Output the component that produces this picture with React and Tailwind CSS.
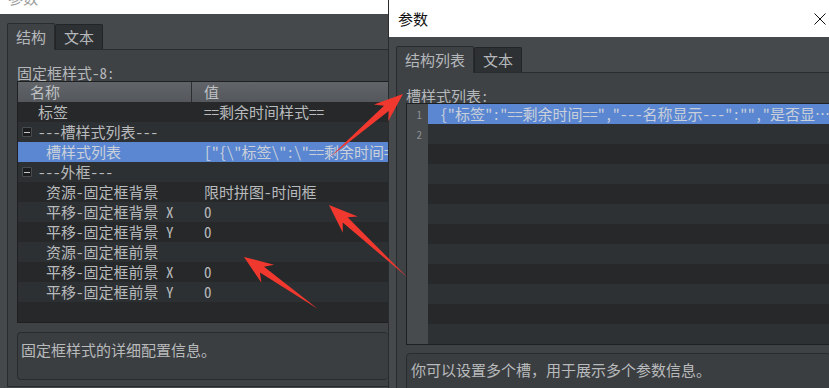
const font = { fontFamily: '"Noto Sans Mono CJK SC", "Noto Sans CJK SC", "DejaVu Sans Mono", monospace' }

const rows = [
  { kind: 'leaf', depth: 0, name: '标签', value: '==剩余时间样式==' },
  { kind: 'group', name: '---槽样式列表---' },
  { kind: 'leaf', depth: 1, name: '槽样式列表', value: '["{\\"标签\\":\\"==剩余时间==\\",\\"---名称显示', selected: true },
  { kind: 'group', name: '---外框---' },
  { kind: 'leaf', depth: 1, name: '资源-固定框背景', value: '限时拼图-时间框' },
  { kind: 'leaf', depth: 1, name: '平移-固定框背景 X', value: '0' },
  { kind: 'leaf', depth: 1, name: '平移-固定框背景 Y', value: '0' },
  { kind: 'leaf', depth: 1, name: '资源-固定框前景', value: '' },
  { kind: 'leaf', depth: 1, name: '平移-固定框前景 X', value: '0' },
  { kind: 'leaf', depth: 1, name: '平移-固定框前景 Y', value: '0' },
  { kind: 'empty' },
]

function Tab({ label, active }) {
  return (
    <div
      className={
        active
          ? 'relative z-10 -mb-px flex h-[27px] items-center rounded-t-[2px] border border-b-0 border-[#2a2b2d] bg-[#3f4245] px-[8px] text-[#b5b8bb]'
          : 'flex h-[25px] items-center rounded-t-[2px] border border-b-0 border-[#232426] bg-[#2e3133] px-[8px] text-[#b5b8bb]'
      }
    >
      {label}
    </div>
  )
}

function Arrow({ from, to }) {
  const [x1, y1] = from
  const [x2, y2] = to
  const len = Math.hypot(x2 - x1, y2 - y1)
  const ux = (x2 - x1) / len
  const uy = (y2 - y1) / len
  const p = (d, w) => `${x2 - ux * d - uy * w},${y2 - uy * d + ux * w}`
  const points = [`${x1},${y1}`, p(22, 3.6), p(29, 11), `${x2},${y2}`, p(29, -11), p(22, -3.6)].join(' ')
  return <polygon points={points} fill="#f0382f" />
}

function LeftWindow() {
  return (
    <div className="flex h-full w-[388px] shrink-0 flex-col">
      <div className="h-[14px] shrink-0 overflow-hidden bg-white">
        <span className="-mt-[12px] ml-[8px] block text-[15px] text-[#9a9a9a]">参数</span>
      </div>
      <div className="flex flex-1 flex-col pl-[7px] pt-[9px]">
        <div className="flex shrink-0 items-end">
          <Tab label="结构" active />
          <Tab label="文本" />
        </div>
        <div className="flex h-[338px] shrink-0 flex-col border border-r-0 border-[#2a2b2d] bg-[#3f4245] pl-[9px]">
          <div className="h-[31px] shrink-0 pt-[14px] text-[15px] leading-[17px] text-[#b5b8bb]">固定框样式-8:</div>
          <div className="shrink-0 border border-r-0 border-[#1f2022] bg-[#26282a]">
            <div className="flex h-[20px] items-center bg-gradient-to-b from-[#61656a] to-[#54585c] text-[#bfc1c3]">
              <div className="w-[173px] pl-[12px]">名称</div>
              <div className="h-full w-px bg-[#2c2e30]" />
              <div className="pl-[12px]">值</div>
            </div>
            {rows.map((row, i) => (
              <div
                key={i}
                className={
                  'flex h-[20px] items-center whitespace-nowrap ' +
                  (row.selected ? 'bg-[#5b87d2] text-[#c9d0da]' : i % 2 ? 'bg-[#2d3033] text-[#b8babc]' : 'bg-[#26282a] text-[#b8babc]')
                }
              >
                {row.kind === 'group' && (
                  <div className="flex items-center pl-[4px]">
                    <span className="flex h-[10px] w-[10px] items-center justify-center rounded-[1px] border border-[#4a4d50] bg-[#1c1d1f]">
                      <span className="h-px w-[6px] bg-[#c8c8c8]" />
                    </span>
                    <span className="ml-[6px]">{row.name}</span>
                  </div>
                )}
                {row.kind === 'leaf' && (
                  <>
                    <div className={'w-[174px] shrink-0 ' + (row.depth ? 'pl-[28px]' : 'pl-[20px]')}>{row.name}</div>
                    <div className="overflow-hidden pl-[12px]">{row.value}</div>
                  </>
                )}
              </div>
            ))}
          </div>
          <div className="mt-[9px] h-[48px] shrink-0 rounded-[4px] border border-r-0 border-[#2a2b2d] bg-[#3b3e41] pl-[3px] pt-[8px] text-[15px] leading-[17px] text-[#b8babc]">
            固定框样式的详细配置信息。
          </div>
        </div>
      </div>
    </div>
  )
}

function RightWindow() {
  return (
    <div className="flex h-full flex-1 flex-col border-l border-[#2a2b2d]">
      <div className="flex h-[37px] shrink-0 items-center justify-between bg-white pl-[9px] pr-[7px]">
        <span className="text-[15px] text-[#111]" style={{ fontFamily: '"Noto Sans CJK SC", sans-serif' }}>参数</span>
        <svg width="12" height="12" viewBox="0 0 12 12">
          <path d="M0.5 0.5 L11.5 11.5 M11.5 0.5 L0.5 11.5" stroke="#111" strokeWidth="1" />
        </svg>
      </div>
      <div className="flex flex-1 flex-col bg-[#46494c] pl-[7px] pt-[9px]">
        <div className="flex shrink-0 items-end">
          <Tab label="结构列表" active />
          <Tab label="文本" />
        </div>
        <div className="flex flex-1 flex-col border-l border-t border-[#2a2b2d] bg-[#3f4245] pl-[9px] pr-[2px]">
          <div className="h-[30px] shrink-0 pt-[14px] text-[15px] leading-[17px] text-[#b5b8bb]">槽样式列表:</div>
          <div className="flex shrink-0 border border-[#1f2022]">
            <div className="w-[21px] shrink-0 bg-[#474b4e]">
              {Array.from({ length: 12 }, (_, i) => (
                <div key={i} className="h-[20px] pr-[6px] text-right text-[11px] leading-[20px] text-[#8d9194]">
                  {i < 2 ? i + 1 : ''}
                </div>
              ))}
            </div>
            <div className="min-w-0 flex-1">
              {Array.from({ length: 12 }, (_, i) => (
                <div key={i} className={'h-[20px] ' + (i === 0 ? 'bg-[#5b87d2]' : i % 2 ? 'bg-[#2e3134]' : 'bg-[#26282a]')}>
                  {i === 0 && (
                    <div className="overflow-hidden whitespace-nowrap pl-[12px] text-[15px] leading-[20px] text-[#c9d0da]">
                      {'{"标签":"==剩余时间==","---名称显示---":"","是否显…'}
                    </div>
                  )}
                </div>
              ))}
            </div>
          </div>
          <div className="mt-[8px] h-[48px] shrink-0 rounded-[4px] border border-[#2a2b2d] bg-[#3b3e41] pl-[4px] pt-[7px] text-[15px] leading-[17px] text-[#b8babc]">
            你可以设置多个槽，用于展示多个参数信息。
          </div>
        </div>
      </div>
    </div>
  )
}

export default function App() {
  return (
    <div className="relative flex h-[388px] w-[829px] overflow-hidden bg-[#46494c] text-[15px] leading-[20px]" style={font}>
      <LeftWindow />
      <RightWindow />
      <svg className="pointer-events-none absolute inset-0" width="829" height="388">
        <Arrow from={[330, 157]} to={[403, 94]} />
        <Arrow from={[407, 277]} to={[329, 205]} />
        <Arrow from={[318, 309]} to={[244, 257]} />
      </svg>
    </div>
  )
}
